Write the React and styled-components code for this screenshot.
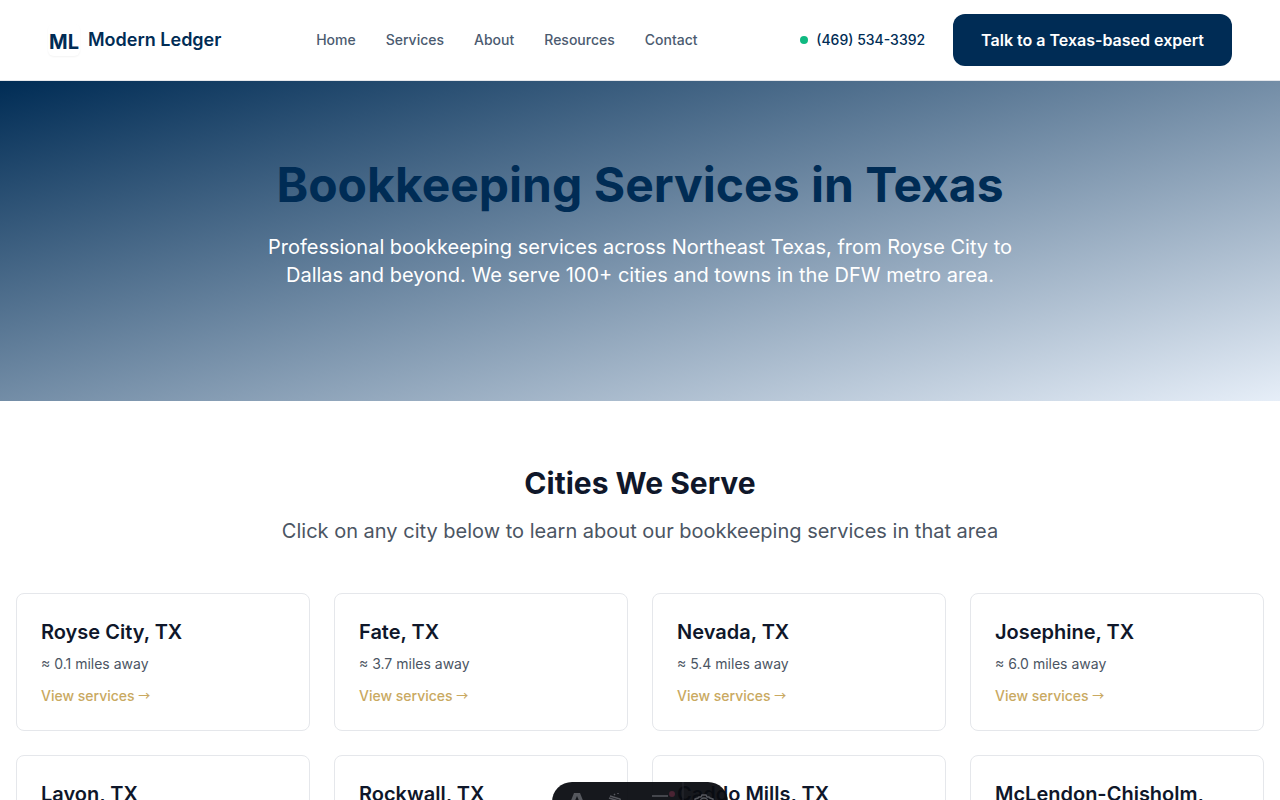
import React from "react";
import styled, { createGlobalStyle } from "styled-components";

const Global = createGlobalStyle`
  *, *::before, *::after { box-sizing: border-box; }
  body { margin: 0; background: #fff; color: #4b5563; font-family: Inter, "Liberation Sans", sans-serif; font-size: 16px; }
  h1, h2, h3, p { margin: 0; }
  a { text-decoration: none; color: inherit; }
`;

const Header = styled.header`
  display: flex;
  align-items: center;
  justify-content: space-between;
  height: 81px;
  padding: 0 48px;
  background: #fff;
  border-bottom: 1px solid #e5e7eb;
`;

const Brand = styled.a`
  display: flex;
  align-items: center;
  gap: 8px;
  color: #002c55;
  font-size: 18px;
  font-weight: 600;
  line-height: 28px;
`;

const LogoTile = styled.span`
  display: flex;
  width: 32px;
  height: 32px;
  border-radius: 6px;
  box-shadow: 0 1px 2px rgba(0, 0, 0, 0.05);
`;

const Nav = styled.nav`
  display: flex;
  gap: 30px;
  margin-right: 8px;
  color: #4b5b70;
  font-size: 14px;
  font-weight: 500;
  line-height: 20px;
`;

const Actions = styled.div`
  display: flex;
  align-items: center;
  gap: 28px;
`;

const Phone = styled.a`
  display: flex;
  align-items: center;
  gap: 8px;
  color: #002c55;
  font-size: 14px;
  font-weight: 500;
  line-height: 20px;
`;

const StatusDot = styled.span`
  width: 8px;
  height: 8px;
  border-radius: 50%;
  background: #10b981;
`;

const CallButton = styled.button`
  height: 52px;
  padding: 0 28px;
  border: 0;
  border-radius: 12px;
  background: #002c55;
  color: #fff;
  font: 600 16px/24px Inter, sans-serif;
`;

const Hero = styled.section`
  padding: 72px 16px 112px;
  background: linear-gradient(to bottom right, #002c55, #e6eef8);
  text-align: center;
`;

const HeroTitle = styled.h1`
  color: #002c55;
  font-size: 48px;
  font-weight: 700;
  line-height: 64px;
`;

const HeroText = styled.p`
  max-width: 768px;
  margin: 16px auto 0;
  color: #fff;
  font-size: 20px;
  line-height: 28px;
`;

const Cities = styled.section`
  padding: 60px 16px;
`;

const SectionTitle = styled.h2`
  color: #0f172a;
  font-size: 30px;
  font-weight: 700;
  line-height: 44px;
  text-align: center;
`;

const SectionText = styled.p`
  margin: 12px 0 48px;
  font-size: 20px;
  line-height: 28px;
  text-align: center;
`;

const Grid = styled.div`
  display: grid;
  grid-template-columns: repeat(4, minmax(0, 1fr));
  gap: 24px;
`;

const Card = styled.a`
  display: block;
  padding: 24px 32px 24px 24px;
  border: 1px solid #e5e7eb;
  border-radius: 8px;
  font-size: 14px;
  line-height: 20px;
`;

const CityName = styled.h3`
  margin-bottom: 8px;
  color: #0f172a;
  font-size: 20px;
  font-weight: 600;
  line-height: 28px;
`;

const ViewLink = styled.span`
  display: block;
  margin-top: 12px;
  color: #c9a961;
  font-weight: 500;
`;

const Arrow = styled.span`
  font-family: "Noto Sans CJK JP", sans-serif;
  font-size: 12px;
  line-height: 1;
`;

const Toolbar = styled.div`
  position: fixed;
  bottom: -22px;
  left: 50%;
  width: 176px;
  height: 40px;
  overflow: hidden;
  transform: translateX(-50%);
  border-radius: 20px;
  background: rgba(10, 12, 17, 0.95);
`;

const cities = [
  ["Royse City, TX", "0.1"],
  ["Fate, TX", "3.7"],
  ["Nevada, TX", "5.4"],
  ["Josephine, TX", "6.0"],
  ["Lavon, TX", "6.8"],
  ["Rockwall, TX", "7.9"],
  ["Caddo Mills, TX", "8.6"],
  ["McLendon-Chisholm, TX", "9.1"],
];

function Logo() {
  return (
    <LogoTile>
      <svg width="32" height="32" viewBox="0 0 32 32" aria-label="ML">
        <text x="1" y="25" fill="#002c55" fontFamily="Inter, sans-serif" fontSize="20" fontWeight="700">ML</text>
      </svg>
    </LogoTile>
  );
}

export default function App() {
  return (
    <>
      <Global />
      <Header>
        <Brand href="#home"><Logo />Modern Ledger</Brand>
        <Nav>
          {["Home", "Services", "About", "Resources", "Contact"].map((item) => (
            <a key={item} href={"#" + item.toLowerCase()}>{item}</a>
          ))}
        </Nav>
        <Actions>
          <Phone href="tel:+14695343392"><StatusDot />(469) 534-3392</Phone>
          <CallButton type="button">Talk to a Texas-based expert</CallButton>
        </Actions>
      </Header>
      <main>
        <Hero>
          <HeroTitle>Bookkeeping Services in Texas</HeroTitle>
          <HeroText>
            Professional bookkeeping services across Northeast Texas, from Royse City to Dallas and beyond. We serve 100+ cities and towns in the DFW metro area.
          </HeroText>
        </Hero>
        <Cities>
          <SectionTitle>Cities We Serve</SectionTitle>
          <SectionText>Click on any city below to learn about our bookkeeping services in that area</SectionText>
          <Grid>
            {cities.map(([name, miles]) => (
              <Card key={name} href="#city">
                <CityName>{name}</CityName>
                <p>≈ {miles} miles away</p>
                <ViewLink>View services <Arrow>→</Arrow></ViewLink>
              </Card>
            ))}
          </Grid>
        </Cities>
      </main>
      <Toolbar>
        <svg width="176" height="40" viewBox="0 0 176 40" fill="none" stroke="#55575d" strokeWidth="1.5" aria-hidden="true">
          <path d="M18 21 22 11h6l4 10h-4l-3-7-3 7z" fill="#55575d" stroke="none" />
          <path d="M57 16 70 20M58 14l10 3 1 4" />
          <path d="M62 12l1 1M66 11v1" />
          <path d="M100 14h16" />
          <circle cx="120" cy="12" r="3" fill="#4a2433" stroke="none" />
          <path d="M131 0v40" stroke="#2b2d33" strokeWidth="1" />
          <path d="M143 20v-3l3-1 1-1 2 0 1-2h4l1 2h2l1 1 3 1v3" />
          <path d="M148 20a4 4 0 0 1 8 0" />
        </svg>
      </Toolbar>
    </>
  );
}
